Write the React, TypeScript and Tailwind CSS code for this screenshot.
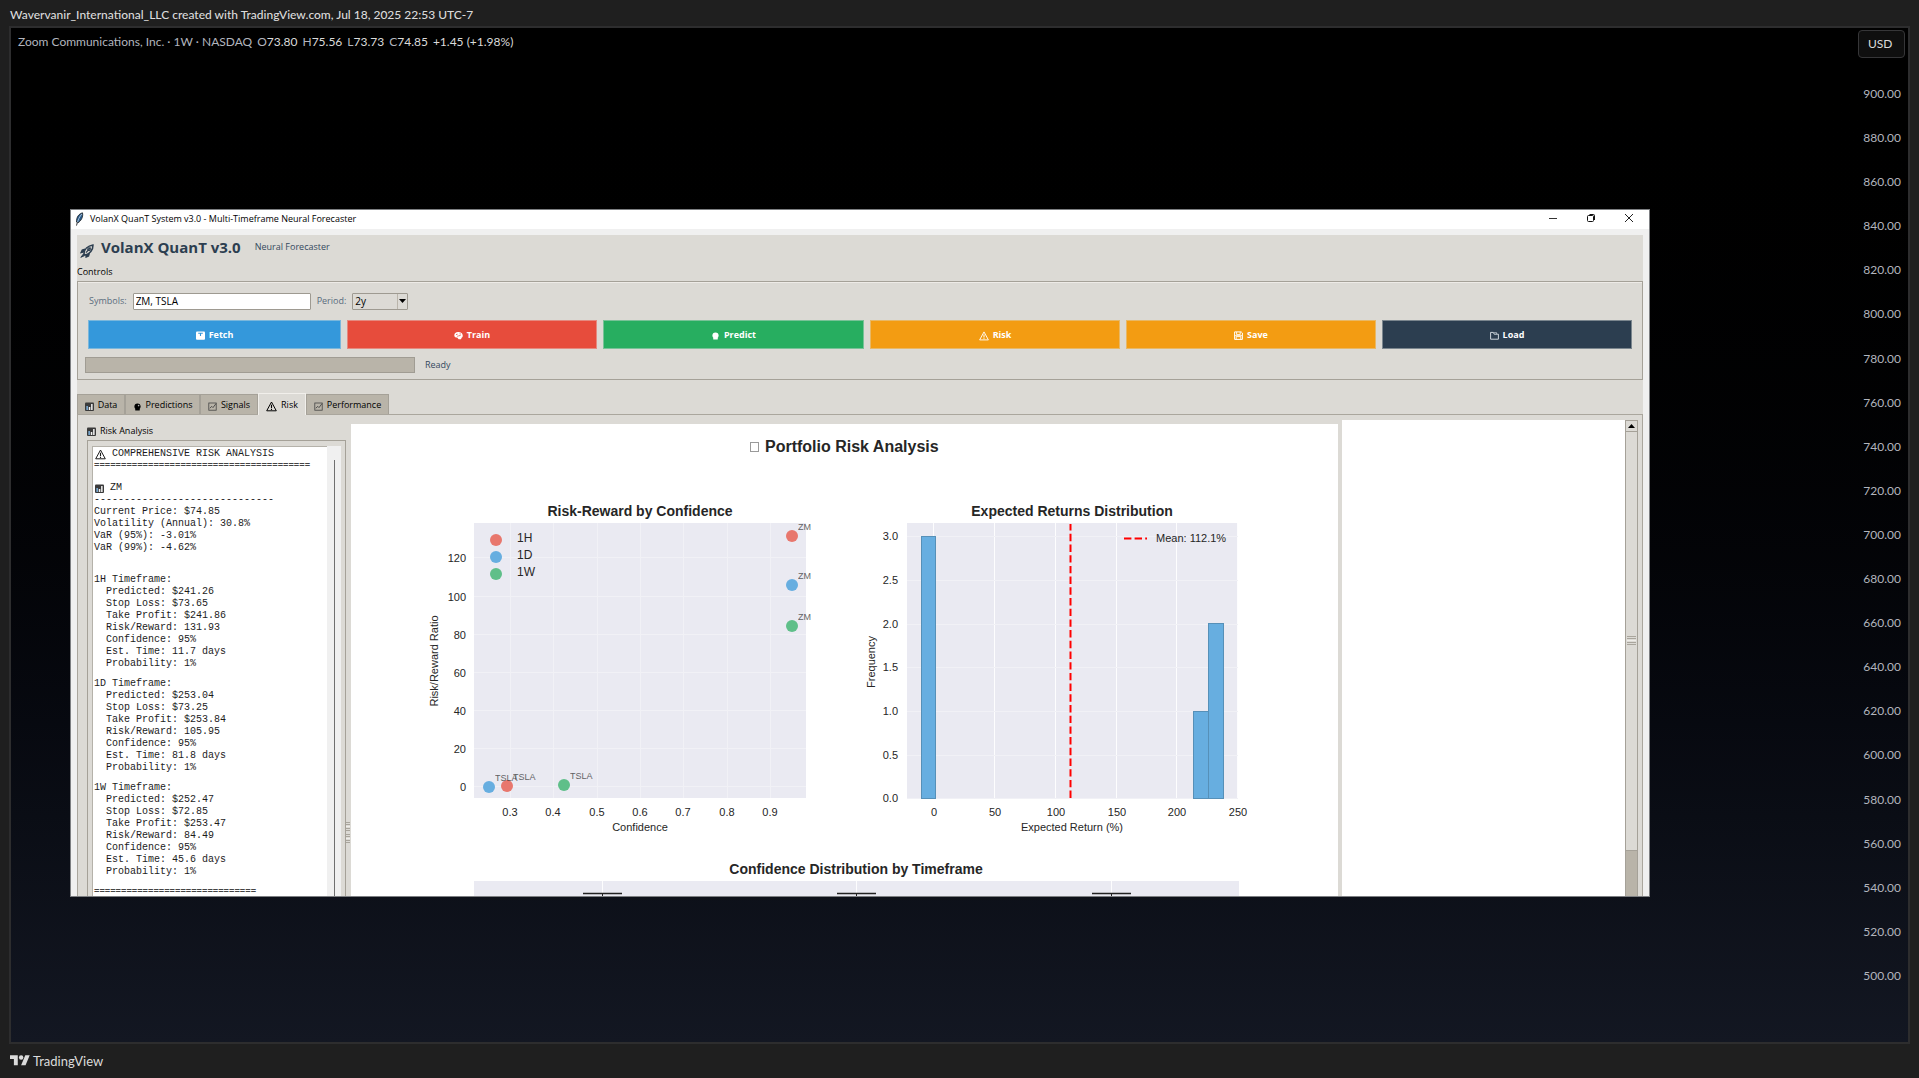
import type { ReactNode } from "react";

const SANS = "font-['Open_Sans','Noto_Sans',sans-serif]";

function BarsIcon({ className = "" }: { className?: string }) {
  return (
    <svg viewBox="0 0 9 9" className={`size-[9px] shrink-0 ${className}`} aria-hidden="true">
      <rect x="0" y="0.5" width="9" height="8.5" rx="1" fill="#3a3a3a" />
      <rect x="1.4" y="4" width="1.5" height="4" fill="#7fb2dd" />
      <rect x="3.8" y="5" width="1.5" height="3" fill="#f2f2f2" />
      <rect x="6.1" y="2" width="1.5" height="6" fill="#f2f2f2" />
    </svg>
  );
}

function BallIcon() {
  return (
    <svg viewBox="0 0 9 9" className="size-[9px] shrink-0" aria-hidden="true">
      <circle cx="4.5" cy="4.6" r="3.1" fill="currentColor" />
      <rect x="2.2" y="6.8" width="4.6" height="1.7" rx="0.6" fill="currentColor" />
      <circle cx="5.6" cy="3.6" r="0.8" fill="#fff" opacity="0.7" />
    </svg>
  );
}

function TrendIcon() {
  return (
    <svg viewBox="0 0 9 9" className="size-[9px] shrink-0" fill="none" stroke="#444" aria-hidden="true">
      <rect x="0.8" y="1" width="7.4" height="7.2" strokeWidth="0.8" />
      <path d="M1.8 6.2 3.8 4.4 5 5.6 8 1.6" strokeWidth="0.9" />
    </svg>
  );
}

function WarnIcon({ className = "size-[11px]" }: { className?: string }) {
  return (
    <svg viewBox="0 0 11 11" className={`shrink-0 ${className}`} fill="none" stroke="currentColor" aria-hidden="true">
      <path d="M5.5 1 10.3 9.8H0.7Z" strokeWidth="1" strokeLinejoin="round" />
      <path d="M5.5 3.8V7.2M5.5 8V9" strokeWidth="1.1" />
    </svg>
  );
}

function FetchIcon() {
  return (
    <svg viewBox="0 0 9 9" className="size-[9px] shrink-0" aria-hidden="true">
      <rect x="0" y="0.5" width="9" height="8.3" rx="1" fill="#fff" />
      <path d="M2.2 2.2H6.8M4.5 2.2V5" stroke="#3498db" strokeWidth="1.1" fill="none" />
    </svg>
  );
}

function BrainIcon() {
  return (
    <svg viewBox="0 0 9 9" className="size-[9px] shrink-0" aria-hidden="true">
      <path d="M4.5 1C2 .8.2 2.4.3 4.4.4 6 1.8 6.7 3.2 6.5L4.6 8.3H7L7.6 6.7C8.7 6.2 9 5 8.6 3.8 8.2 2 6.5 1 4.5 1Z" fill="#fff" />
      <path d="M2 3.6 3.6 3.2M4.2 5 6.6 4.4M3 5.2H3.8M5.6 2.8 6.8 3" stroke="#e74c3c" strokeWidth="0.8" fill="none" />
    </svg>
  );
}

function SaveIcon() {
  return (
    <svg viewBox="0 0 9 9" className="size-[9px] shrink-0" fill="none" stroke="#fff" aria-hidden="true">
      <path d="M0.6 0.9H7.2L8.4 2V8.4H0.6Z" strokeWidth="1" />
      <path d="M2.6 1V3.6H6.2V1M2.2 8.2V5.6H6.8V8.2M1 4.7H8" strokeWidth="0.9" />
    </svg>
  );
}

function FolderIcon() {
  return (
    <svg viewBox="0 0 9 9" className="size-[9px] shrink-0" fill="none" stroke="#dfe6ec" aria-hidden="true">
      <path d="M0.6 8.2V1.4H3.4L4.2 3.2H8.4V8.2Z" strokeWidth="0.9" />
      <path d="M4 1.6H6.6V3" strokeWidth="0.6" />
    </svg>
  );
}

function RocketIcon() {
  return (
    <svg viewBox="0 0 14 14" className="size-[14px] shrink-0" fill="none" stroke="#2c3e50" aria-hidden="true">
      <path d="M4 9.8C4.2 5.5 7.5 1.8 13 1 13.2 6 9.5 9.8 5.6 11Z" strokeWidth="1.5" />
      <path d="M5 5.2 2.2 6 1 8.6 4 8M9.4 9.4 8.6 12 6 13.2 6 10.8" strokeWidth="1.2" fill="#2c3e50" />
      <path d="M6 8.6 10.6 3.6" strokeWidth="1.2" />
      <circle cx="9" cy="5.2" r="1.3" strokeWidth="1.1" />
      <path d="M3.6 9.8 0.8 13.3 4.6 11.6Z" fill="#2c3e50" />
    </svg>
  );
}

function FeatherIcon() {
  return (
    <svg viewBox="0 0 9 14" className="h-[14px] w-[9px] shrink-0" aria-hidden="true">
      <path d="M7.5 0.8C4 1.8 1.2 5 1.5 10L2.8 11C6 9 8.5 5 7.5 0.8Z" fill="#2b5d8c" stroke="#111" strokeWidth="0.7" />
      <path d="M6.8 2C4.6 4.5 2.8 8 1.6 13.5" stroke="#dfeaf5" strokeWidth="0.7" fill="none" />
      <path d="M2.4 10 1.5 13.6" stroke="#111" strokeWidth="0.8" fill="none" />
    </svg>
  );
}

const prices = Array.from({ length: 21 }, (_, i) => (900 - i * 20).toFixed(2));

const quote: [string, string][] = [
  ["O", "73.80"],
  ["H", "75.56"],
  ["L", "73.73"],
  ["C", "74.85"],
];

const actions: { label: string; icon: ReactNode; tone: string }[] = [
  { label: "Fetch", icon: <FetchIcon />, tone: "bg-[#3498db] border-[#7ab7dc]" },
  { label: "Train", icon: <BrainIcon />, tone: "bg-[#e74c3c] border-[#e58a80]" },
  { label: "Predict", icon: <BallIcon />, tone: "bg-[#27ae60] border-[#78c297]" },
  { label: "Risk", icon: <WarnIcon className="size-[10px]" />, tone: "bg-[#f39c12] border-[#e8b866]" },
  { label: "Save", icon: <SaveIcon />, tone: "bg-[#f39c12] border-[#e8b866]" },
  { label: "Load", icon: <FolderIcon />, tone: "bg-[#2c3e50] border-[#7b868e]" },
];

const tabs: { label: string; icon: ReactNode; width: string }[] = [
  { label: "Data", icon: <BarsIcon />, width: "w-[48px]" },
  { label: "Predictions", icon: <BallIcon />, width: "w-[75px]" },
  { label: "Signals", icon: <TrendIcon />, width: "w-[58px]" },
  { label: "Risk", icon: <WarnIcon />, width: "w-[48px]" },
  { label: "Performance", icon: <TrendIcon />, width: "w-[83px]" },
];

const frames = [
  { name: "1H", rows: ["Predicted: $241.26", "Stop Loss: $73.65", "Take Profit: $241.86", "Risk/Reward: 131.93", "Confidence: 95%", "Est. Time: 11.7 days", "Probability: 1%"] },
  { name: "1D", rows: ["Predicted: $253.04", "Stop Loss: $73.25", "Take Profit: $253.84", "Risk/Reward: 105.95", "Confidence: 95%", "Est. Time: 81.8 days", "Probability: 1%"] },
  { name: "1W", rows: ["Predicted: $252.47", "Stop Loss: $72.85", "Take Profit: $253.47", "Risk/Reward: 84.49", "Confidence: 95%", "Est. Time: 45.6 days", "Probability: 1%"] },
];

function Report() {
  return (
    <div className="flex min-w-0 flex-1 flex-col gap-2 overflow-hidden border-t border-l border-[#b5b2aa] bg-white pt-px pl-px font-['Liberation_Mono',monospace] text-[10px] leading-[12px] whitespace-pre text-[#1c1c1c]">
      <div>
        <div className="flex items-center gap-[6px]">
          <WarnIcon className="ml-px size-[11px]" />
          COMPREHENSIVE RISK ANALYSIS
        </div>
        <div className="text-[9px] font-bold text-[#444]">{"=".repeat(40)}</div>
      </div>
      <div>
        <div className="flex items-center gap-[6px] pt-[2px]">
          <BarsIcon className="ml-px" />
          ZM
        </div>
        <div>{"-".repeat(30)}</div>
        <div>Current Price: $74.85</div>
        <div>Volatility (Annual): 30.8%</div>
        <div>VaR (95%): -3.01%</div>
        <div>VaR (99%): -4.62%</div>
      </div>
      <div className="mt-3 flex flex-col gap-2">
        {frames.map((f) => (
          <div key={f.name}>
            <div>{f.name} Timeframe:</div>
            {f.rows.map((r) => (
              <div key={r}>{"  " + r}</div>
            ))}
          </div>
        ))}
        <div className="text-[9px] font-bold text-[#444]">{"=".repeat(30)}</div>
      </div>
    </div>
  );
}

const COLORS = { "1H": "#e8776d", "1D": "#67aee0", "1W": "#5fbf89" };

const scatterX: [string, number][] = [["0.3", 510], ["0.4", 553], ["0.5", 597], ["0.6", 640], ["0.7", 683], ["0.8", 727], ["0.9", 770]];
const scatterY: [string, number][] = [["0", 787], ["20", 749], ["40", 711], ["60", 673], ["80", 635], ["100", 597], ["120", 558]];
const histX: [string, number][] = [["0", 934], ["50", 995], ["100", 1056], ["150", 1117], ["200", 1177], ["250", 1238]];
const histY: [string, number][] = [["0.0", 798], ["0.5", 755], ["1.0", 711], ["1.5", 667], ["2.0", 624], ["2.5", 580], ["3.0", 536]];

const points: { x: number; y: number; c: string; t: string }[] = [
  { x: 792, y: 536, c: COLORS["1H"], t: "ZM" },
  { x: 792, y: 585, c: COLORS["1D"], t: "ZM" },
  { x: 792, y: 626, c: COLORS["1W"], t: "ZM" },
  { x: 489, y: 787, c: COLORS["1D"], t: "TSLA" },
  { x: 507, y: 786, c: COLORS["1H"], t: "TSLA" },
  { x: 564, y: 785, c: COLORS["1W"], t: "TSLA" },
];

function Figure() {
  return (
    <svg viewBox="351 424 987 473" className="block w-full font-['Liberation_Sans',Arial,sans-serif] text-[11px]" fill="#262626" role="img" aria-label="Portfolio Risk Analysis">
      <rect x="750.5" y="442.5" width="8" height="9" fill="none" stroke="#9a9a9a" />
      <text x="765" y="452" className="text-[16px] font-bold">Portfolio Risk Analysis</text>

      <text x="640" y="516" textAnchor="middle" className="text-[14px] font-bold">Risk-Reward by Confidence</text>
      <rect x="474" y="523" width="332" height="275" fill="#eaeaf2" />
      {scatterX.map(([t, x]) => (
        <g key={t}>
          <path d={`M${x}.5 523V798`} stroke="#f1f1f6" />
          <text x={x} y="816" textAnchor="middle">{t}</text>
        </g>
      ))}
      {scatterY.map(([t, y]) => (
        <g key={t}>
          <path d={`M474 ${y - 1}.5H806`} stroke="#f1f1f6" />
          <text x="466" y={y + 4} textAnchor="end">{t}</text>
        </g>
      ))}
      <text x="640" y="831" textAnchor="middle">Confidence</text>
      <text transform="translate(438 661) rotate(-90)" textAnchor="middle">Risk/Reward Ratio</text>
      {points.map((p) => (
        <circle key={`${p.x}-${p.y}`} cx={p.x} cy={p.y} r="6" fill={p.c} />
      ))}
      {points.map((p) => (
        <text key={`${p.x}-${p.y}`} x={p.x + 6} y={p.y - 6} className="text-[9px]" opacity="0.7">{p.t}</text>
      ))}
      {(["1H", "1D", "1W"] as const).map((k, i) => (
        <g key={k}>
          <circle cx="496" cy={540 + i * 17} r="6" fill={COLORS[k]} />
          <text x="517" y={542 + i * 17} className="text-[12px]">{k}</text>
        </g>
      ))}

      <text x="1072" y="516" textAnchor="middle" className="text-[14px] font-bold">Expected Returns Distribution</text>
      <rect x="907" y="523" width="331" height="275" fill="#eaeaf2" />
      {histX.map(([t, x]) => (
        <g key={t}>
          <path d={`M${x - 1}.5 523V798`} stroke="#fdfdfe" />
          <text x={x} y="816" textAnchor="middle">{t}</text>
        </g>
      ))}
      {histY.map(([t, y]) => (
        <g key={t}>
          <path d={`M907 ${y}.5H1238`} stroke="#f1f1f6" />
          <text x="898" y={y + 4} textAnchor="end">{t}</text>
        </g>
      ))}
      <g fill="#67aee0" stroke="#5690b8">
        <rect x="921.5" y="536.5" width="14" height="262" />
        <rect x="1193.5" y="711.5" width="15" height="87" />
        <rect x="1208.5" y="623.5" width="15" height="175" />
      </g>
      <path d="M1070.5 798V524" stroke="#ff0000" strokeWidth="2" strokeDasharray="7.4 3.3" />
      <path d="M1124 538.5H1147" stroke="#ff0000" strokeWidth="2" strokeDasharray="7.4 3.2" />
      <text x="1156" y="542">Mean: 112.1%</text>
      <text x="1072" y="831" textAnchor="middle">Expected Return (%)</text>
      <text transform="translate(875 662) rotate(-90)" textAnchor="middle">Frequency</text>

      <text x="856" y="874" textAnchor="middle" className="text-[14px] font-bold">Confidence Distribution by Timeframe</text>
      <rect x="474" y="881" width="765" height="16" fill="#eaeaf2" />
      {[602, 856, 1111].map((x) => (
        <g key={x}>
          <path d={`M${x}.5 881V893`} stroke="#fdfdfe" />
          <path d={`M${x - 19} 893.5H${x + 20}`} stroke="#222" strokeWidth="1.5" />
          <path d={`M${x}.5 893V897`} stroke="#222" />
        </g>
      ))}
    </svg>
  );
}

function Grip() {
  return (
    <span className="flex w-full flex-col gap-px" aria-hidden="true">
      <span className="h-px bg-[#a9a59c]" />
      <span className="h-px bg-[#a9a59c]" />
      <span className="h-px bg-[#efede9]" />
      <span className="h-px bg-[#a9a59c]" />
      <span className="h-px bg-[#a9a59c]" />
    </span>
  );
}

function ForecasterWindow() {
  return (
    <section className={`mr-[198px] mb-[145px] ml-[59px] flex min-h-0 flex-1 flex-col overflow-hidden border border-[#7d7f82] bg-[#f0f0f0] text-[9px] leading-[12px] text-black ${SANS}`}>
      <header className="flex h-[19px] shrink-0 items-center justify-between bg-white pl-[4px]">
        <div className="flex items-center gap-[6px] pb-[2px]">
          <FeatherIcon />
          <h1>VolanX QuanT System v3.0 - Multi-Timeframe Neural Forecaster</h1>
        </div>
        <div className="flex h-full items-center pb-[3px]">
          <button type="button" aria-label="Minimize" className="flex h-full w-[38px] items-center justify-center">
            <svg viewBox="0 0 10 10" className="size-[10px]"><path d="M1 5.5H9" stroke="#333" /></svg>
          </button>
          <button type="button" aria-label="Restore" className="flex h-full w-[37px] items-center justify-center">
            <svg viewBox="0 0 10 10" className="size-[10px]" fill="none" stroke="#111"><rect x="1.5" y="2.5" width="6" height="6" rx="1" /><path d="M3.5 1.5H7.5Q8.5 1.5 8.5 2.5V7" /></svg>
          </button>
          <button type="button" aria-label="Close" className="flex h-full w-[40px] items-center justify-center">
            <svg viewBox="0 0 10 10" className="size-[10px]" stroke="#222"><path d="M1 1 9 9M9 1 1 9" /></svg>
          </button>
        </div>
      </header>

      <div className="mx-[6px] mt-[6px] flex min-h-0 flex-1 flex-col bg-[#dcdad5]">
        <div className="flex h-[27px] shrink-0 items-center pb-[3px] pl-[3px]">
          <span className="pt-[7px]"><RocketIcon /></span>
          <h2 className="ml-[7px] text-[15px] leading-[20px] font-bold text-[#2c3e50]">VolanX QuanT v3.0</h2>
          <span className="ml-[14px] text-[#34495e]">Neural Forecaster</span>
        </div>

        <h3 className="h-[19px] shrink-0 pt-[4px]">Controls</h3>
        <div className="flex shrink-0 flex-col border border-[#a5a198] px-[7px] pt-[10px] pb-[6px] shadow-[inset_0_1px_0_#eeebe7]">
          <div className="flex h-[18px] items-center pl-[4px] text-[#5a6c7d]">
            <label htmlFor="symbols">Symbols:</label>
            <input id="symbols" defaultValue="ZM, TSLA" className="ml-[6px] h-[17px] w-[178px] rounded-[1px] border border-[#9e9a91] bg-white px-[2px] text-[10px] text-black" />
            <label htmlFor="period" className="ml-[6px]">Period:</label>
            <span className="relative ml-[6px] h-[17px] w-[56px]">
              <select id="period" defaultValue="2y" className="block size-full appearance-none rounded-[1px] border border-[#9e9a91] bg-[#dcdad5] px-[2px] text-[10px] leading-[14px] text-black">
                <option>1y</option>
                <option>2y</option>
                <option>5y</option>
              </select>
              <span className="pointer-events-none absolute inset-y-px right-px flex w-[10px] items-center justify-center border-l border-[#bab5ab]">
                <svg viewBox="0 0 7 4" className="h-[4px] w-[7px]"><path d="M0 0H7L3.5 4Z" /></svg>
              </span>
            </span>
          </div>
          <div className="mt-[10px] grid grid-cols-[253fr_250fr_261fr_250fr_250fr_250fr] gap-[6px] px-[3px]">
            {actions.map((a) => (
              <button key={a.label} type="button" className={`flex h-[29px] items-center justify-center gap-[4px] border text-[9px] font-bold text-white ${a.tone}`}>
                <span className="pt-[2px]">{a.icon}</span>
                {a.label}
              </button>
            ))}
          </div>
          <div className="mt-[8px] flex h-4 items-center">
            <div role="progressbar" aria-label="Progress" aria-valuenow={0} className="h-4 w-[330px] border border-[#a09c93] bg-[#b9b4a9]" />
            <span className="ml-[10px] text-[#34495e]">Ready</span>
          </div>
        </div>

        <div role="tablist" className="mt-[13px] flex h-[21px] shrink-0 items-end">
          {tabs.map((t) => {
            const active = t.label === "Risk";
            return (
              <button
                key={t.label}
                type="button"
                role="tab"
                aria-selected={active}
                className={`flex items-center justify-center gap-[4px] border-x border-t pt-px ${t.width} ${
                  active ? "z-10 -mb-px h-[22px] border-[#f1efeb] bg-[#dcdad5]" : "h-[20px] border-[#a5a198] bg-[#b9b4a9]"
                }`}
              >
                <span className="pt-[2px]">{t.icon}</span>
                {t.label}
              </button>
            );
          })}
        </div>

        <div className="flex min-h-0 flex-1 border-x border-t border-[#aaa69d]">
          <aside className="flex w-[268px] shrink-0 flex-col pl-[9px]">
            <h3 className="flex shrink-0 items-center gap-[4px] pt-[10px] pb-[3px]">
              <BarsIcon />
              Risk Analysis
            </h3>
            <div className="flex min-h-0 flex-1 border-x border-t border-[#a5a198] pt-[5px] pr-[4px] pl-[4px]">
              <Report />
              <div className="flex w-[14px] shrink-0 justify-center bg-[#f0f0f0] pt-[14px]">
                <span className="w-px bg-[#6f6f6f]" />
              </div>
            </div>
          </aside>
          <div className="flex w-[5px] shrink-0 flex-col justify-end pb-[53px]">
            <span className="flex flex-col gap-[3px] pr-px"><Grip /><Grip /></span>
          </div>
          <div className="mt-[9px] min-w-0 flex-1 overflow-hidden bg-white">
            <Figure />
          </div>
          <div className="mt-[5px] ml-[4px] w-[283px] shrink-0 bg-white" />
          <div className="mt-[5px] mr-[4px] flex w-[13px] shrink-0 flex-col border-x border-[#a5a198] bg-[#b9b4a9]">
            <button type="button" aria-label="Scroll up" className="flex h-[12px] shrink-0 items-center justify-center border-y border-[#a5a198] bg-[#dcdad5]">
              <svg viewBox="0 0 7 4" className="h-[4px] w-[7px]"><path d="M0 4H7L3.5 0Z" /></svg>
            </button>
            <div className="flex h-[88%] flex-col justify-center border-b border-[#a5a198] bg-[#dcdad5] px-px"><Grip /></div>
          </div>
        </div>
      </div>
    </section>
  );
}

export default function App() {
  return (
    <div className="flex h-screen flex-col overflow-hidden bg-[#1f1f1f] px-[9px] font-['Lato','Open_Sans',sans-serif] text-[12px] leading-4 text-[#dbdbdb]">
      <p className="flex h-[26px] shrink-0 items-center pt-[3px] pl-px font-medium">
        Wavervanir_International_LLC created with TradingView.com, Jul 18, 2025 22:53 UTC-7
      </p>
      <main className="flex min-h-0 flex-1 border-2 border-[#2d2d2e] bg-linear-to-b from-black to-[#131722]">
        <div className="flex min-w-0 flex-1 flex-col">
          <div className="mb-[153px] flex h-[28px] shrink-0 items-center gap-[5px] pl-[7px] text-[#b2b5be]">
            <span>Zoom Communications, Inc. · 1W · NASDAQ</span>
            {quote.map(([k, v]) => (
              <span key={k}>{k}<span className="text-[#dbdbdb]">{v}</span></span>
            ))}
            <span className="text-[#dbdbdb]">+1.45 (+1.98%)</span>
          </div>
          <ForecasterWindow />
        </div>
        <div className="flex w-[60px] shrink-0 flex-col items-end">
          <button type="button" className="mt-[2px] mr-[3px] h-7 w-[47px] shrink-0 rounded border border-[#363638] bg-[#0f0f0f] pl-[9px] text-left">USD</button>
          <ul className="mt-[28px] mb-[58px] flex min-h-0 flex-1 flex-col justify-between pr-[7px] text-[#b2b5be]">
            {prices.map((p) => <li key={p}>{p}</li>)}
          </ul>
        </div>
      </main>
      <footer className="flex h-[34px] shrink-0 items-center gap-[3px] pl-px text-[13px]">
        <svg viewBox="0 0 36 28" className="w-[20px]" fill="#dbdbdb" aria-hidden="true">
          <path d="M14 22H7V11H0V4h14v18ZM28 22h-8l7.5-18h8L28 22Z" />
          <circle cx="20" cy="8" r="4" />
        </svg>
        TradingView
      </footer>
    </div>
  );
}
